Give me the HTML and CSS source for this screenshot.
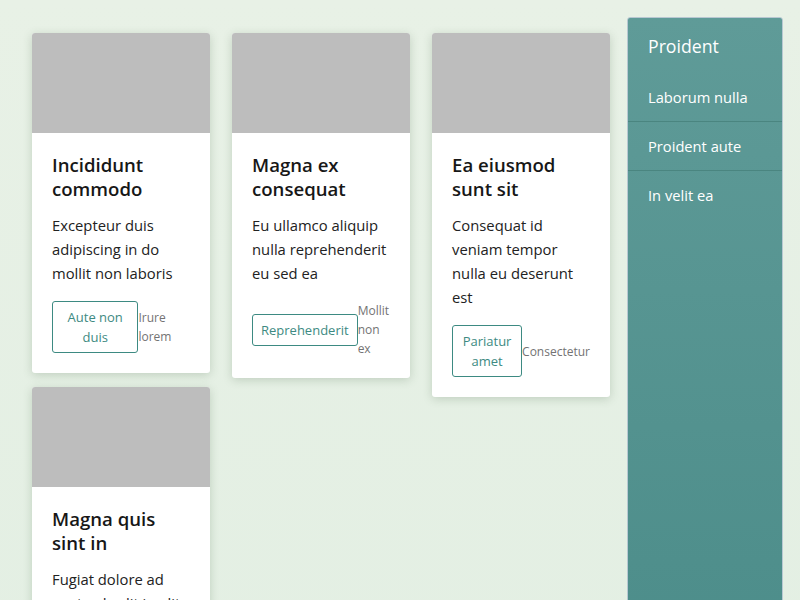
FILE: index.html
```html
<!DOCTYPE html>
<html lang="en">
<head>
<meta charset="utf-8">
<title>Cards</title>
<link rel="stylesheet" href="styles.css">
</head>
<body>
<main class="main">
  <div class="column">
    <article class="card">
      <div class="card-media"></div>
      <div class="card-body">
        <h2 class="card-title">Incididunt commodo</h2>
        <p class="card-text">Excepteur duis adipiscing in do mollit non laboris</p>
        <div class="card-footer">
          <button class="btn">Aute non duis</button>
          <span class="meta">Irure lorem</span>
        </div>
      </div>
    </article>
    <article class="card">
      <div class="card-media"></div>
      <div class="card-body">
        <h2 class="card-title">Magna quis sint in</h2>
        <p class="card-text">Fugiat dolore ad nostrud velit in elit</p>
        <div class="card-footer">
          <button class="btn">Velit esse</button>
          <span class="meta">Dolor</span>
        </div>
      </div>
    </article>
  </div>
  <div class="column">
    <article class="card">
      <div class="card-media"></div>
      <div class="card-body">
        <h2 class="card-title">Magna ex consequat</h2>
        <p class="card-text">Eu ullamco aliquip nulla reprehenderit eu sed ea</p>
        <div class="card-footer">
          <button class="btn">Reprehenderit</button>
          <span class="meta">Mollit non ex</span>
        </div>
      </div>
    </article>
  </div>
  <div class="column">
    <article class="card">
      <div class="card-media"></div>
      <div class="card-body">
        <h2 class="card-title">Ea eiusmod sunt sit</h2>
        <p class="card-text">Consequat id veniam tempor nulla eu deserunt est</p>
        <div class="card-footer">
          <button class="btn">Pariatur amet</button>
          <span class="meta">Consectetur</span>
        </div>
      </div>
    </article>
  </div>
</main>
<aside class="sidebar">
  <h3 class="sidebar-title">Proident</h3>
  <nav class="sidebar-nav">
    <a class="sidebar-item">Laborum nulla</a>
    <a class="sidebar-item">Proident aute</a>
    <a class="sidebar-item">In velit ea</a>
  </nav>
</aside>
</body>
</html>
```
FILE: styles.css
```css
* { box-sizing: border-box; }
html { background: linear-gradient(180deg, #e8f1e6 0%, #e3efe3 100%); min-height: 100%; }
body {
  margin: 0;
  padding: 17px 17px 0 17px;
  display: flex;
  align-items: stretch;
  font-family: "Open Sans", "Noto Sans", sans-serif;
  color: #1b1b1b;
  min-height: 100vh;
}
.main {
  display: flex;
  align-items: flex-start;
  gap: 22px;
  padding: 16px 17px 16px 15px;
}
.column {
  width: 178px;
  display: flex;
  flex-direction: column;
  gap: 14px;
}
.card {
  background: #fff;
  border-radius: 3px;
  overflow: hidden;
  box-shadow: 0 2px 10px rgba(60, 90, 60, 0.22);
}
.card-media {
  height: 100px;
  background: #bdbdbd;
}
.card-body { padding: 20px; }
.card-title {
  margin: 0 0 12px;
  font-size: 18.6px;
  line-height: 24px;
  font-weight: 600;
  color: #171717;
}
.card-text {
  margin: 0 0 16px;
  font-size: 14.8px;
  line-height: 24px;
  color: #222;
}
.card-footer {
  display: flex;
  align-items: center;
}
.btn {
  font-family: inherit;
  font-size: 13px;
  line-height: 20px;
  color: #3d8a82;
  background: #fff;
  border: 1px solid #3d8a82;
  border-radius: 3px;
  padding: 5px 8px;
}
.meta {
  font-size: 12px;
  line-height: 19px;
  color: #737373;
}
.sidebar {
  width: 156px;
  flex: none;
  border: 1px solid #b8c8d2;
  border-radius: 3px 3px 0 0;
  background: linear-gradient(180deg, #5f9b98 0%, #4b8c89 100%);
  color: #fff;
}
.sidebar-title {
  margin: 0;
  padding: 15px 20px 14px;
  font-size: 17.7px;
  line-height: 26px;
  font-weight: 400;
}
.sidebar-nav { display: flex; flex-direction: column; }
.sidebar-item {
  display: block;
  padding: 12px 20px;
  font-size: 14.7px;
  line-height: 24px;
  color: #fff;
}
.sidebar-item + .sidebar-item { border-top: 1px solid #4a8580; }
```
